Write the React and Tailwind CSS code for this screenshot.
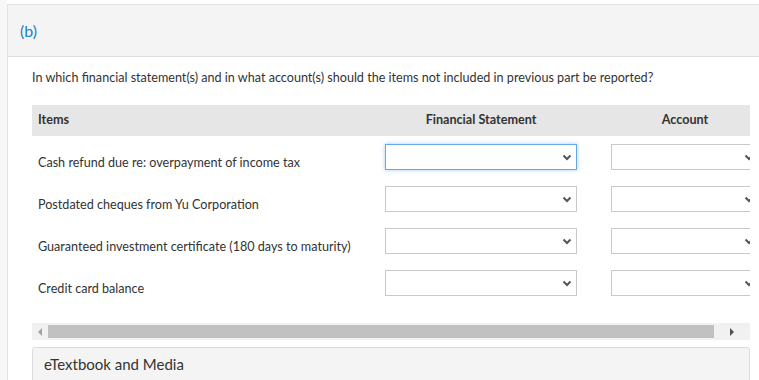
const items = [
  "Cash refund due re: overpayment of income tax",
  "Postdated cheques from Yu Corporation",
  "Guaranteed investment certificate (180 days to maturity)",
  "Credit card balance",
];

function Chevron() {
  return (
    <svg width="10" height="7" viewBox="0 0 10 7" className="shrink-0">
      <polyline
        points="1.5,1.5 5,5 8.5,1.5"
        fill="none"
        stroke="#555"
        strokeWidth="2"
      />
    </svg>
  );
}

function FakeSelect({ width, focused }) {
  return (
    <div
      className={
        focused
          ? "h-[26px] flex items-center justify-end pr-[4px] bg-white border border-[#66a9e6] shadow-[0_0_4px_rgba(102,169,230,0.6)]"
          : "h-[26px] flex items-center justify-end pr-[4px] bg-white border border-[#c9c9c9]"
      }
      style={{ width }}
    >
      <Chevron />
    </div>
  );
}

export default function App() {
  return (
    <div className="flex w-[759px] h-[380px] overflow-hidden bg-white font-['Lato',sans-serif] text-[#333]">
      <div className="w-[7px] shrink-0 bg-[#f8f8f8]" />

      <div className="flex-1 mt-[4px] border-l border-t border-[#e2e2e2]">
        {/* Part header */}
        <div className="h-[52px] bg-[#f4f4f4] border-b border-[#dedede] pl-[12px] flex items-center">
          <span className="text-[16px] text-[#1b82c5]">(b)</span>
        </div>

        <div className="pl-[24px]">
          <p className="mt-[12px] text-[12.6px] leading-[18px]">
            In which financial statement(s) and in what account(s) should the items not included in previous part be reported?
          </p>

          {/* Table */}
          <div className="mt-[18px] w-[718px] overflow-hidden">
            <div className="w-[740px]">
              <div className="h-[31px] bg-[#e6e6e6] flex items-center text-[12.6px] font-bold">
                <div className="w-[353px] pl-[6px]">Items</div>
                <div className="w-[192px] text-center">Financial Statement</div>
                <div className="w-[34px]" />
                <div className="w-[148px] text-center">Account</div>
              </div>

              {items.map((item, i) => (
                <div key={item} className="h-[42px] flex items-start py-[8px]">
                  <div className="w-[353px] pl-[6px] pt-[11px] text-[12.6px] leading-[15px] whitespace-nowrap">
                    {item}
                  </div>
                  <FakeSelect width={192} focused={i === 0} />
                  <div className="w-[34px]" />
                  <FakeSelect width={148} />
                </div>
              ))}
            </div>
          </div>

          {/* Horizontal scrollbar */}
          <div className="mt-[19px] w-[718px] h-[17px] bg-[#f1f1f1] flex items-center">
            <div className="w-[16px] flex justify-center">
              <div className="w-0 h-0 border-y-[4px] border-y-transparent border-r-[4px] border-r-[#a3a3a3]" />
            </div>
            <div className="w-[666px] h-[13px] bg-[#c1c1c1]" />
            <div className="flex-1 flex justify-center">
              <div className="w-0 h-0 border-y-[4px] border-y-transparent border-l-[4px] border-l-[#505050]" />
            </div>
          </div>

          {/* eTextbook */}
          <div className="mt-[7px] w-[718px] h-[60px] bg-[#f4f4f4] border border-[#dcdcdc] rounded-t-[3px] pl-[11px] pt-[4px]">
            <span className="text-[15px] leading-[20px]">eTextbook and Media</span>
          </div>
        </div>
      </div>
    </div>
  );
}
